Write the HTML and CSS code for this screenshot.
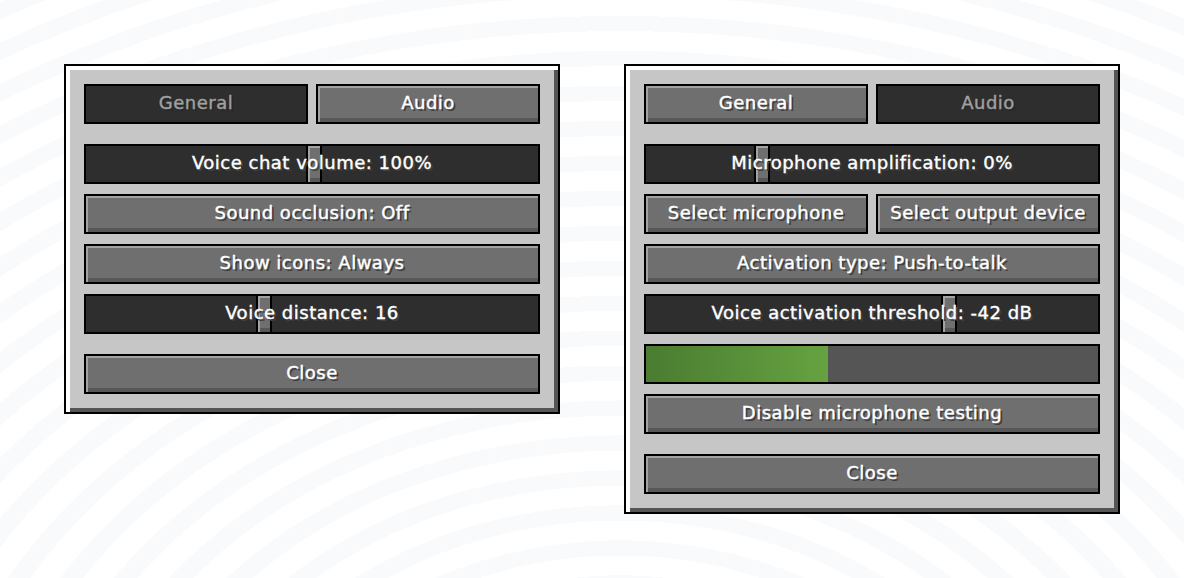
FILE: index.html
```html
<!DOCTYPE html>
<html lang="en">
<head>
<meta charset="utf-8">
<title>Voice chat settings</title>
<link rel="stylesheet" href="styles.css">
</head>
<body>
<main class="stage">
  <section class="panel">
    <div class="pair tabs">
      <div class="btn off"><span class="txt">General</span></div>
      <div class="btn"><span class="txt">Audio</span></div>
    </div>
    <div class="slider"><span class="knob" style="left:220px"></span><span class="txt">Voice chat volume: 100%</span></div>
    <div class="btn"><span class="txt">Sound occlusion: Off</span></div>
    <div class="btn"><span class="txt">Show icons: Always</span></div>
    <div class="slider"><span class="knob" style="left:170px"></span><span class="txt">Voice distance: 16</span></div>
    <div class="btn close"><span class="txt">Close</span></div>
  </section>

  <section class="panel">
    <div class="pair tabs">
      <div class="btn"><span class="txt">General</span></div>
      <div class="btn off"><span class="txt">Audio</span></div>
    </div>
    <div class="slider"><span class="knob" style="left:108px"></span><span class="txt">Microphone amplification: 0%</span></div>
    <div class="pair">
      <div class="btn"><span class="txt">Select microphone</span></div>
      <div class="btn"><span class="txt">Select output device</span></div>
    </div>
    <div class="btn"><span class="txt">Activation type: Push-to-talk</span></div>
    <div class="slider"><span class="knob" style="left:295px"></span><span class="txt">Voice activation threshold: -42 dB</span></div>
    <div class="meter"><span class="level" style="width:40.3%"></span></div>
    <div class="btn"><span class="txt">Disable microphone testing</span></div>
    <div class="btn close"><span class="txt">Close</span></div>
  </section>
</main>
</body>
</html>
```
FILE: styles.css
```css
* { box-sizing: border-box; }

html, body {
  margin: 0;
  height: 100%;
}

body {
  background-color: #ffffff;
  background-image: repeating-radial-gradient(ellipse 1000px 760px at 620px 820px,
    #ffffff 0 26px, #f9fafc 26px 46px);
  font-family: "DejaVu Sans", "Verdana", sans-serif;
  overflow: hidden;
}

.stage {
  display: flex;
  justify-content: center;
  align-items: flex-start;
  gap: 64px;
  padding-top: 64px;
}

.panel {
  width: 496px;
  display: flex;
  flex-direction: column;
  gap: 10px;
  padding: 18px;
  background: #c6c6c6;
  border: 2px solid #000;
  box-shadow: inset 4px 4px 0 #ffffff, inset -4px -4px 0 #555555;
}

.pair {
  display: grid;
  grid-template-columns: 1fr 1fr;
  gap: 8px;
}

.tabs { margin-bottom: 10px; }
.close { margin-top: 10px; }

.btn, .slider, .meter {
  position: relative;
  height: 40px;
  border: 2px solid #000;
  display: flex;
  align-items: center;
  justify-content: center;
}

.btn {
  background: #6f6f6f;
  box-shadow: inset 2px 2px 0 #a2a2a2, inset 0 -4px 0 #575757;
}

.btn.off {
  background: #2e2e2e;
  box-shadow: none;
}

.slider {
  background: #2e2e2e;
}

.knob {
  position: absolute;
  top: -2px;
  width: 16px;
  height: 40px;
  border: 2px solid #000;
  background: #6f6f6f;
  box-shadow: inset 2px 2px 0 #a2a2a2, inset 0 -4px 0 #575757;
}

.txt {
  position: relative;
  color: #ffffff;
  font-size: 18px;
  line-height: 20px;
  letter-spacing: 0.5px;
  white-space: nowrap;
  -webkit-text-stroke: 0.4px currentColor;
  text-shadow: 2px 2px 0 #3f3f3f;
  margin-top: -2px;
}

.off .txt {
  color: #a0a0a0;
  text-shadow: 2px 2px 0 #282828;
}

.meter {
  background: #555555;
  justify-content: flex-start;
  align-items: stretch;
}

.level {
  display: block;
  background: linear-gradient(90deg, #4a7c31, #66a241);
}
```
